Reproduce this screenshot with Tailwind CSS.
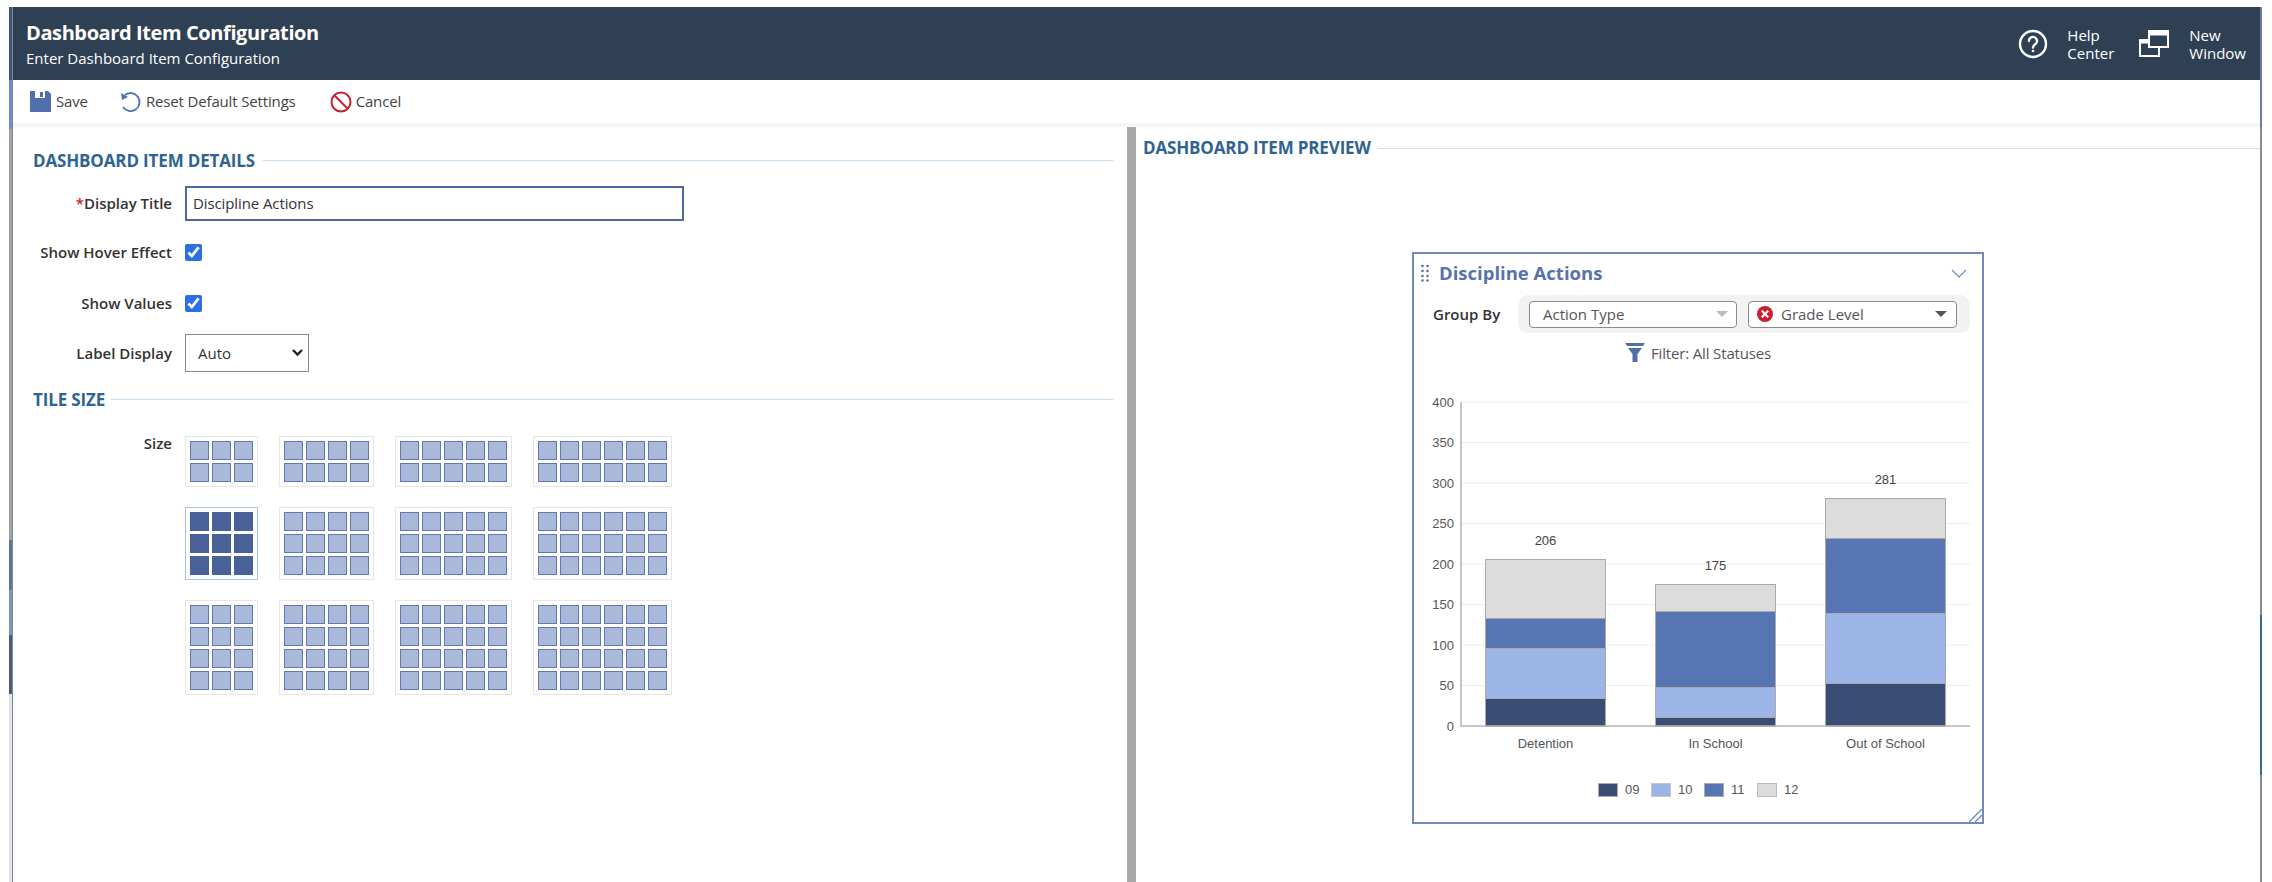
<!DOCTYPE html>
<html lang="en">
<head>
    <meta charset="UTF-8">
    <title>Dashboard Item Configuration</title>
    <script src="https://cdn.jsdelivr.net/npm/@tailwindcss/browser@4"></script>
</head>
<body class="bg-white font-['Open_Sans',sans-serif] text-[#333]">
    <div class="ml-[9px] mr-[10px] pt-[7px] h-[882px] flex">
        <!-- window edge, left -->
        <div class="w-[3px] shrink-0 flex flex-col">
            <div class="h-[73px] bg-[#3e5578]"></div>
            <div class="h-[49px] bg-[#6f8ec8]"></div>
            <div class="h-[411px] bg-[#a3a3a3]"></div>
            <div class="h-[50px] bg-[#5d74a5]"></div>
            <div class="h-[45px] bg-[#7f97bd]"></div>
            <div class="h-[59px] bg-[#4e5a75]"></div>
            <div class="flex-1 bg-[#dfe3e8]"></div>
        </div>

        <div id="app" class="flex-1 min-w-0 flex flex-col border-l border-[#7d8a9c] overflow-hidden">
            <!-- header -->
            <header class="h-[73px] shrink-0 bg-[#2f4054] text-white flex justify-between pl-[13px]">
                <div class="pt-[14px]">
                    <h1 class="text-[20px] leading-[24px] font-bold tracking-[-0.4px]">Dashboard Item Configuration</h1>
                    <p class="text-[15px] leading-[20px] mt-[3px]">Enter Dashboard Item Configuration</p>
                </div>
                <div class="flex items-center text-[15px] leading-[18px] pr-[14px]">
                    <svg class="w-[30px] h-[30px] mr-[19px]" viewBox="0 0 30 30" fill="none" stroke="white" stroke-width="2.4"><circle cx="15" cy="15" r="13"/><path d="M11 12a4 4 0 1 1 6.500 3c-1.600 1.200-2.500 1.800-2.500 3.600" stroke-linecap="round"/><circle cx="15" cy="22" r="1.300" fill="white" stroke="none"/></svg>
                    <div class="mr-[25px]">Help<br>Center</div>
                    <svg class="w-[30px] h-[27px] mr-[20px]" viewBox="0 0 30 27" fill="none" stroke="white" stroke-width="2"><rect x="10" y="1" width="19" height="16"/><rect x="10" y="1" width="19" height="4.500" fill="white" stroke="none"/><path d="M10 10H1V26H20V17"/><path d="M1 10h9v3.500H1z" fill="white" stroke="none"/></svg>
                    <div>New<br>Window</div>
                </div>
            </header>

            <!-- toolbar -->
            <div class="h-[43px] shrink-0 flex items-center text-[15px] tracking-[-0.15px] text-[#444] pl-[17px]">
                <svg class="w-[21px] h-[21px] mr-[5px]" viewBox="0 0 21 21"><path d="M0 0h18l3 3v18H0z" fill="#4f6fae"/><path d="M5 0h10v7H5z" fill="white"/><path d="M10 1h3v5h-3z" fill="#4f6fae"/></svg>
                <span class="mr-[31px]">Save</span>
                <svg class="w-[23px] h-[22px] mr-[4px]" viewBox="0 0 23 22" fill="none" stroke="#4f6fae" stroke-width="1.800"><path d="M6 4a9 9 0 1 1-2 12"/><path d="M2 2l1 7 6-3z" fill="#4f6fae" stroke="none"/></svg>
                <span class="mr-[34px]">Reset Default Settings</span>
                <svg class="w-[22px] h-[22px] mr-[4px]" viewBox="0 0 22 22" fill="none" stroke="#c8202f" stroke-width="2"><circle cx="11" cy="11" r="9.500"/><path d="M4.500 4.500l13 13"/></svg>
                <span>Cancel</span>
            </div>
            <div class="h-[4px] shrink-0 bg-[#f6f6f6]"></div>

            <main class="flex-1 flex min-h-0">
                <!-- left pane -->
                <section class="w-[1114px] shrink-0 pl-[20px] pr-[14px]">
                    <div class="flex items-center mt-[21px] h-[24px]">
                        <h2 class="pt-[2px] text-[17px] font-bold text-[#2f6490] tracking-[-0.15px] whitespace-nowrap">DASHBOARD ITEM DETAILS</h2>
                        <div class="flex-1 h-px bg-[#c6deee] ml-[8px]"></div>
                    </div>

                    <div class="grid grid-cols-[139px_1fr] gap-x-[13px] text-[15px] mt-[14px]">
                        <label class="h-[35px] flex items-center justify-end font-semibold"><span class="text-[#c8202f]">*</span>Display Title</label>
                        <div class="h-[35px] w-[499px] border-2 border-[#4d69a3] flex items-center pl-[6px] tracking-[-0.1px]">Discipline Actions</div>

                        <label class="mt-[23px] h-[17px] flex items-center justify-end font-semibold">Show Hover Effect</label>
                        <input type="checkbox" checked class="mt-[23px] w-[17px] h-[17px] accent-[#2b6fe6]">

                        <label class="mt-[34px] h-[17px] flex items-center justify-end font-semibold">Show Values</label>
                        <input type="checkbox" checked class="mt-[34px] w-[17px] h-[17px] accent-[#2b6fe6]">

                        <label class="mt-[22px] h-[38px] flex items-center justify-end font-semibold">Label Display</label>
                        <div class="mt-[22px] h-[38px] w-[124px] border border-[#8a8a8a] flex items-center justify-between pl-[12px] pr-[5px]">Auto
                            <svg class="w-[11px] h-[8px]" viewBox="0 0 11 8" fill="none" stroke="#222" stroke-width="2.400"><path d="M1 1l4.500 4.500L10 1"/></svg>
                        </div>
                    </div>

                    <div class="flex items-center mt-[15px] h-[24px]">
                        <h2 class="pt-[2px] text-[17px] font-bold text-[#2f6490] tracking-[-0.15px]">TILE SIZE</h2>
                        <div class="flex-1 h-px bg-[#c6deee] ml-[6px]"></div>
                    </div>

                    <div class="grid grid-cols-[139px_1fr] gap-x-[13px] mt-[25px] text-[15px]">
                        <label class="text-right font-semibold leading-[15px]">Size</label>
                        <div id="tiles" class="grid grid-cols-[max-content_max-content_max-content_max-content] gap-x-[21px] gap-y-[20px]"></div>
                    </div>
                </section>

                <!-- splitter -->
                <div class="w-[9px] shrink-0 bg-[#a9a9a9]"></div>

                <!-- right pane -->
                <section class="flex-1 pl-[7px] min-w-0">
                    <div class="flex items-center mt-[9px] h-[24px]">
                        <h2 class="text-[17px] font-bold text-[#2f6490] tracking-[-0.15px] whitespace-nowrap">DASHBOARD ITEM PREVIEW</h2>
                        <div class="flex-1 h-px bg-[#c6deee] ml-[7px]"></div>
                    </div>

                    <!-- tile card -->
                    <div class="relative mt-[92px] ml-[269px] w-[572px] h-[572px] border-2 border-[#6f88bd]">
                        <div class="flex items-center justify-between h-[38px] pl-[7px] pr-[15px]">
                            <div class="flex items-center">
                                <svg class="w-[8px] h-[18px] mr-[10px]" viewBox="0 0 8 18" fill="#5872ae"><circle cx="1.500" cy="2" r="1.300"/><circle cx="6.500" cy="2" r="1.300"/><circle cx="1.500" cy="7" r="1.300"/><circle cx="6.500" cy="7" r="1.300"/><circle cx="1.500" cy="12" r="1.300"/><circle cx="6.500" cy="12" r="1.300"/><circle cx="1.500" cy="16.500" r="1.300"/><circle cx="6.500" cy="16.500" r="1.300"/></svg>
                                <span class="text-[18.5px] font-bold text-[#5872ae]">Discipline Actions</span>
                            </div>
                            <svg class="w-[16px] h-[9px]" viewBox="0 0 16 9" fill="none" stroke="#6f88bd" stroke-width="1.200"><path d="M1 1l7 7 7-7"/></svg>
                        </div>

                        <div class="flex items-center mt-[3px] pl-[19px] text-[15px]">
                            <span class="font-semibold w-[85px]">Group By</span>
                            <div class="w-[452px] h-[38px] bg-[#f2f2f2] rounded-[10px] flex items-center pl-[11px] gap-[11px]">
                                <div class="w-[208px] h-[27px] bg-white border border-[#8a8a8a] rounded-[4px] flex items-center justify-between pl-[13px] pr-[8px] text-[#555]">Action Type
                                    <span class="w-0 h-0 border-x-[6px] border-x-transparent border-t-[6px] border-t-[#bbb]"></span>
                                </div>
                                <div class="w-[209px] h-[27px] bg-white border border-[#8a8a8a] rounded-[4px] flex items-center justify-between pl-[8px] pr-[9px] text-[#555]">
                                    <span class="flex items-center gap-[8px]">
                                        <svg class="w-[16px] h-[16px]" viewBox="0 0 15 15"><circle cx="7.500" cy="7.500" r="7.500" fill="#c8202f"/><path d="M4.500 4.500l6 6M10.500 4.500l-6 6" stroke="white" stroke-width="2"/></svg>
                                        Grade Level
                                    </span>
                                    <span class="w-0 h-0 border-x-[6px] border-x-transparent border-t-[6px] border-t-[#555]"></span>
                                </div>
                            </div>
                        </div>

                        <div class="flex items-center justify-center mt-[9px] h-[22px] text-[15px] tracking-[-0.15px] text-[#555]">
                            <svg class="w-[20px] h-[20px] mr-[6px]" viewBox="0 0 20 20" fill="#4f6fae"><path d="M0 0h20l-2 3H2z"/><path d="M3 5h14l-4.500 6v8H7.500v-8z"/></svg>
                            Filter: All Statuses
                        </div>

                        <!-- chart -->
                        <svg id="chart" class="absolute left-0 top-[140px] w-[568px] h-[380px] font-['Liberation_Sans',sans-serif]" viewBox="0 0 568 380" fill="none"></svg>

                        <div class="absolute left-[184px] top-[526px] flex items-center text-[13px] text-[#555] font-['Liberation_Sans',sans-serif]">
                            <span class="w-[20px] h-[14px] bg-[#3a4d75] border border-[#aaa] mr-[7px]"></span><span class="w-[26px]">09</span>
                            <span class="w-[20px] h-[14px] bg-[#9db4e6] border border-[#c6c6c6] mr-[7px]"></span><span class="w-[26px]">10</span>
                            <span class="w-[20px] h-[14px] bg-[#5775b2] border border-[#aaa] mr-[7px]"></span><span class="w-[26px]">11</span>
                            <span class="w-[20px] h-[14px] bg-[#dddcdd] border border-[#bbb] mr-[7px]"></span><span>12</span>
                        </div>

                        <svg class="absolute right-0 bottom-0 w-[13px] h-[13px]" viewBox="0 0 13 13" fill="none" stroke="#6f88bd" stroke-width="1.300"><path d="M0 13L13 0M6 13l7-7"/></svg>
                    </div>
                </section>
            </main>
        </div>

        <!-- window edge, right -->
        <div class="w-[2px] shrink-0 flex flex-col">
            <div class="h-[122px] bg-[#6a7ca8]"></div>
            <div class="h-[486px] bg-[#8c8c8c]"></div>
            <div class="h-[160px] bg-[#3f6a8c]"></div>
            <div class="flex-1 bg-[#8c8c8c]"></div>
        </div>
    </div>

    <script>
        // tile size picker: cols x rows
        const sizes = [
            [3, 2], [4, 2], [5, 2], [6, 2],
            [3, 3], [4, 3], [5, 3], [6, 3],
            [3, 4], [4, 4], [5, 4], [6, 4]
        ];
        const tiles = document.getElementById('tiles');
        sizes.forEach(([cols, rows], i) => {
            const selected = i === 4;
            const btn = document.createElement('div');
            btn.className = selected
                ? 'border border-[#a9c1ee] p-[4px] flex flex-wrap gap-[3px] content-start'
                : 'border border-[#e6e6e6] p-[4px] flex flex-wrap gap-[3px] content-start';
            btn.style.width = (cols * 22 + 7) + 'px';
            btn.style.height = (rows * 22 + 7) + 'px';
            for (let n = 0; n < cols * rows; n++) {
                const cell = document.createElement('div');
                cell.className = selected
                    ? 'w-[19px] h-[19px] bg-[#4a6098]'
                    : 'w-[19px] h-[19px] bg-[#aab9d9] border border-[#6079b2]';
                btn.appendChild(cell);
            }
            tiles.appendChild(btn);
        });

        const NS = 'http://www.w3.org/2000/svg';
        const chart = document.getElementById('chart');
        const ox = 1414, oy = 394; // page position of the svg
        const add = (tag, attrs, text) => {
            const el = document.createElementNS(NS, tag);
            Object.entries(attrs).forEach(([k, v]) => el.setAttribute(k, v));
            if (text !== undefined) el.textContent = text;
            chart.appendChild(el);
        };
        const yAt = v => 726 - oy - v * 0.81;
        for (let v = 0; v <= 400; v += 50) {
            if (v > 0) add('line', { x1: 1461 - ox, x2: 1970 - ox, y1: yAt(v), y2: yAt(v), stroke: '#eeeeee' });
            add('text', { x: 1454 - ox, y: yAt(v) + 4.5, 'text-anchor': 'end', 'font-size': 13, fill: '#555' }, v);
        }
        const colors = ['#3a4d75', '#9db4e6', '#5775b2', '#dddcdd'];
        const bars = [
            { x: 1485, label: 'Detention', total: 206, tops: [726, 698, 648, 618, 559] },
            { x: 1655, label: 'In School', total: 175, tops: [726, 717, 687, 611, 584] },
            { x: 1825, label: 'Out of School', total: 281, tops: [726, 683, 613, 538, 498] }
        ];
        bars.forEach(b => {
            colors.forEach((c, i) => {
                add('rect', { x: b.x - ox + 0.5, y: b.tops[i + 1] - oy + 0.5, width: 120, height: b.tops[i] - b.tops[i + 1], fill: c, stroke: '#aaaaaa' });
            });
            add('text', { x: b.x + 60.5 - ox, y: b.tops[4] - 14 - oy, 'text-anchor': 'middle', 'font-size': 13, fill: '#444' }, b.total);
            add('text', { x: b.x + 60.5 - ox, y: 748 - oy, 'text-anchor': 'middle', 'font-size': 13, fill: '#555' }, b.label);
        });
        add('path', { d: `M${1461 - ox} ${402 - oy}V${726 - oy}H${1970 - ox}`, stroke: '#b5b5b5', 'stroke-width': 1.5 });
    </script>
</body>
</html>
